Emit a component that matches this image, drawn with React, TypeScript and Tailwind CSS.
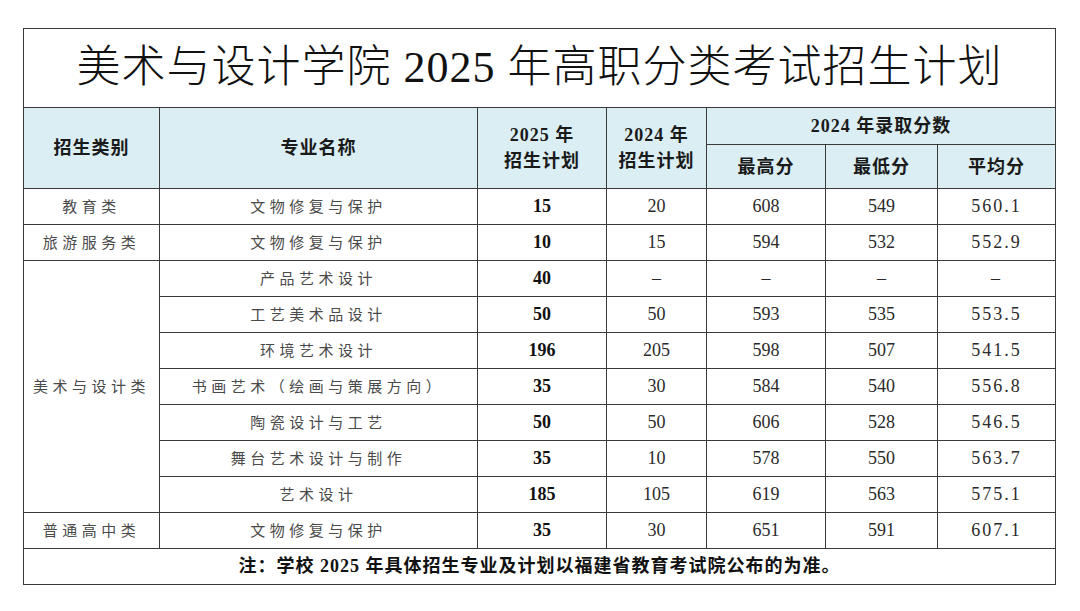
const serif = "font-['Liberation_Serif','Noto_Sans_CJK_SC',serif]";

type Row = {
  cat?: string;
  span?: number;
  major: string;
  p25: string;
  p24: string;
  hi: string;
  lo: string;
  avg: string;
};

const rows: Row[] = [
  { cat: "教育类", span: 1, major: "文物修复与保护", p25: "15", p24: "20", hi: "608", lo: "549", avg: "560.1" },
  { cat: "旅游服务类", span: 1, major: "文物修复与保护", p25: "10", p24: "15", hi: "594", lo: "532", avg: "552.9" },
  { cat: "美术与设计类", span: 7, major: "产品艺术设计", p25: "40", p24: "–", hi: "–", lo: "–", avg: "–" },
  { major: "工艺美术品设计", p25: "50", p24: "50", hi: "593", lo: "535", avg: "553.5" },
  { major: "环境艺术设计", p25: "196", p24: "205", hi: "598", lo: "507", avg: "541.5" },
  { major: "书画艺术（绘画与策展方向）", p25: "35", p24: "30", hi: "584", lo: "540", avg: "556.8" },
  { major: "陶瓷设计与工艺", p25: "50", p24: "50", hi: "606", lo: "528", avg: "546.5" },
  { major: "舞台艺术设计与制作", p25: "35", p24: "10", hi: "578", lo: "550", avg: "563.7" },
  { major: "艺术设计", p25: "185", p24: "105", hi: "619", lo: "563", avg: "575.1" },
  { cat: "普通高中类", span: 1, major: "文物修复与保护", p25: "35", p24: "30", hi: "651", lo: "591", avg: "607.1" },
];

const cell = "border border-[#3a3a3a] text-center align-middle p-0";
const head = `${cell} bg-[#dbeef4] font-bold text-[18px] tracking-[1px] text-[#1a1a1a] leading-[26px]`;
const zh = "font-['Noto_Sans_CJK_SC',sans-serif] text-[15px] tracking-[4.5px] text-[#4a4a4a]";
const num = "font-['Liberation_Serif',serif] text-[18px] text-[#2a2a2a]";

export default function App() {
  return (
    <div className="w-[1080px] h-[611px] bg-white pt-[28px] pl-[23px]">
      <table className={`table-fixed w-[1032px] border-collapse border-[1.5px] border-[#1a1a1a] ${serif}`}>
        <colgroup>
          <col className="w-[136px]" />
          <col className="w-[318px]" />
          <col className="w-[129px]" />
          <col className="w-[100px]" />
          <col className="w-[119px]" />
          <col className="w-[112px]" />
          <col className="w-[118px]" />
        </colgroup>
        <tbody>
          <tr className="h-[79px]">
            <td colSpan={7} className={`${cell} text-[44px] font-light text-[#111] tracking-[1px]`}>
              美术与设计学院 2025 年高职分类考试招生计划
            </td>
          </tr>
          <tr className="h-[37px]">
            <td rowSpan={2} className={head}>招生类别</td>
            <td rowSpan={2} className={head}>专业名称</td>
            <td rowSpan={2} className={head}>
              2025 年<br />招生计划
            </td>
            <td rowSpan={2} className={head}>
              2024 年<br />招生计划
            </td>
            <td colSpan={3} className={head}>2024 年录取分数</td>
          </tr>
          <tr className="h-[44px]">
            <td className={head}>最高分</td>
            <td className={head}>最低分</td>
            <td className={head}>平均分</td>
          </tr>
          {rows.map((r, i) => (
            <tr key={i} className="h-[36px]">
              {r.cat && (
                <td rowSpan={r.span} className={`${cell} ${zh}`}>
                  {r.cat}
                </td>
              )}
              <td className={`${cell} ${zh}`}>{r.major}</td>
              <td className={`${cell} ${num} font-bold !text-[#111]`}>{r.p25}</td>
              <td className={`${cell} ${num}`}>{r.p24}</td>
              <td className={`${cell} ${num}`}>{r.hi}</td>
              <td className={`${cell} ${num}`}>{r.lo}</td>
              <td className={`${cell} ${num} tracking-[2px]`}>{r.avg}</td>
            </tr>
          ))}
          <tr className="h-[36px]">
            <td colSpan={7} className={`${cell} text-[18px] tracking-[1px] font-bold text-[#111]`}>
              注：学校 2025 年具体招生专业及计划以福建省教育考试院公布的为准。
            </td>
          </tr>
        </tbody>
      </table>
    </div>
  );
}
